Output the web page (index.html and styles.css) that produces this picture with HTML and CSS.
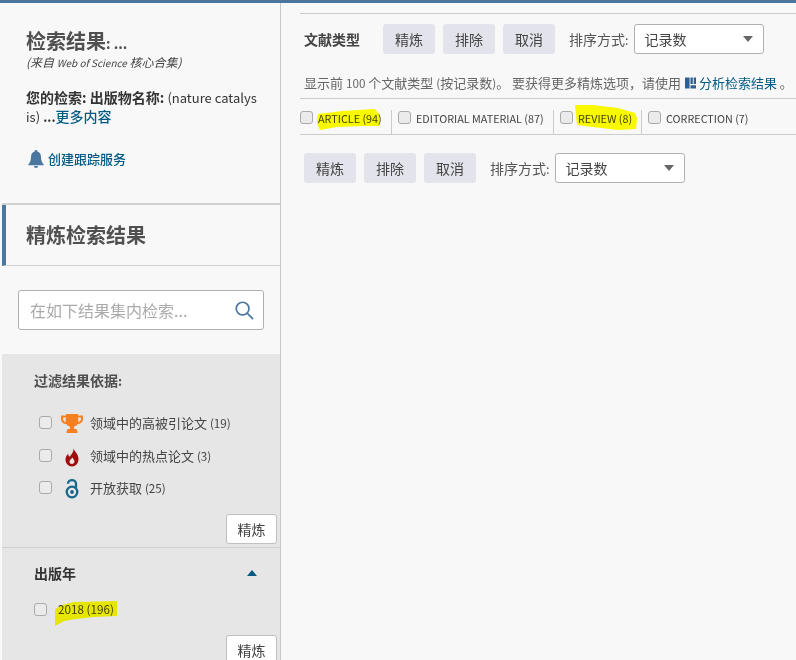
FILE: index.html
```html
<!DOCTYPE html>
<html lang="zh">
<head>
<meta charset="utf-8">
<title>检索结果</title>
<link rel="stylesheet" href="styles.css">
</head>
<body>
<div class="page">
  <aside class="side">
    <section class="summary">
      <h1>检索结果<span class="tail">: ...</span></h1>
      <p class="source">(来自 <span class="wos">Web of Science</span> 核心合集)</p>
      <p class="query"><b>您的检索: 出版物名称:</b> <span class="term">(nature catalys<br>is)</span> <b class="lat">...</b><a class="more">更多内容</a></p>
      <a class="alert">
        <svg class="bell" viewBox="0 0 16 18"><path d="M8 0a1.300 1.300 0 0 1 1.300 1.500C11.800 2.100 13 4.300 13 7c0 3.500 1 5.500 2.600 7.300.3.400.1.900-.4.900H.8c-.5 0-.7-.5-.4-.9C2 12.500 3 10.500 3 7c0-2.700 1.200-4.900 3.700-5.500A1.300 1.300 0 0 1 8 0zM6 16h4a2 2 0 0 1-4 0z"/></svg>
        <span>创建跟踪服务</span>
      </a>
    </section>
    <h2 class="refine-title">精炼检索结果</h2>
    <div class="search-wrap">
      <div class="search">
        <span class="placeholder">在如下结果集内检索...</span>
        <svg class="search-icon" viewBox="0 0 20 20"><circle cx="8" cy="8" r="6.700" /><path d="M13 13l6 6"/></svg>
      </div>
    </div>
    <section class="panel filters">
      <h3>过滤结果依据<span class="lat">:</span></h3>
      <ul class="filter-list">
        <li><input type="checkbox" class="box">
          <svg class="ficon" viewBox="0 0 22 20"><path fill="#f5801f" d="M5 0h12v1.500h5V5c0 3-2.500 5-5.500 5.300-.8 1.200-2 2-3.500 2.300V15h2.500l1 3v1H5.500v-1l1-3H9v-2.400c-1.500-.3-2.700-1.100-3.500-2.300C2.500 10 0 8 0 5V1.500h5zM2 3.500V5c0 1.500 1.200 2.800 2.800 3.200C4.300 6.900 4.900 5 5 3.500zm18 0h-3c.1 1.500.7 3.400.2 4.700C18.800 7.800 20 6.500 20 5z"/></svg>
          <span>领域中的高被引论文 <span class="lat">(19)</span></span></li>
        <li><input type="checkbox" class="box">
          <svg class="ficon" viewBox="0 0 22 20"><path fill="#a00c0c" fill-rule="evenodd" d="M12.500 1c.5 3.500 5 5.500 5 11 0 4.500-3 7.500-6.500 7.500S4.500 16.500 4.500 12.500c0-2.800 1.500-4.800 2.800-5.800 0 1.500.3 2.500 1.200 3C10 8 13 5 12.500 1zM11.500 10.500c-1.200 1.500-3 2.500-3 4.300 0 1.400 1.100 2.200 2.400 2.200s2.600-.9 2.600-2.400c0-1.600-1.500-2.500-2-4.100z"/></svg>
          <span>领域中的热点论文 <span class="lat">(3)</span></span></li>
        <li><input type="checkbox" class="box">
          <svg class="ficon" viewBox="0 0 22 20"><g fill="none" stroke="#13688c" stroke-width="2.300"><circle cx="11" cy="13" r="5.300"/><path d="M7 4.800C7 2.600 8.800 1.200 11 1.200s4 1.400 4 3.600v4"/></g><circle cx="11" cy="13" r="1.900" fill="#13688c"/></svg>
          <span>开放获取 <span class="lat">(25)</span></span></li>
      </ul>
      <div class="panel-foot"><button class="btn-white">精炼</button></div>
    </section>
    <section class="panel years">
      <div class="year-head"><h3>出版年</h3><i class="caret-up"></i></div>
      <label class="year-row"><input type="checkbox" class="box">
        <span class="marked lat">2018 (196)
          <svg class="scribble s-year" viewBox="0 0 63 25"><path d="M1 8L8 4 20 1 63 0V15L40 16 22 18 10 20 1 25z"/></svg>
        </span></label>
      <div class="panel-foot"><button class="btn-white">精炼</button></div>
    </section>
  </aside>
  <main class="main">
    <div class="toolbar first">
      <strong class="type-title">文献类型</strong>
      <button class="btn">精炼</button>
      <button class="btn">排除</button>
      <button class="btn">取消</button>
      <span class="sort-label">排序方式<span class="lat">:</span></span>
      <div class="select"><span>记录数</span><i class="caret-down"></i></div>
    </div>
    <p class="note">显示前 <span class="lat">100</span> 个文献类型 <span class="lat">(</span>按记录数<span class="lat">)</span>。 要获得更多精炼选项，请使用 <svg class="analyze" viewBox="0 0 12 12"><path d="M0 0h5v12H0zM6 0h2.500v7H6zM9.500 0H12v7H9.500zM6 8.500h6V12H6z"/></svg> <a>分析检索结果</a> 。</p>
    <div class="types">
      <label class="type t1"><input type="checkbox" class="box"><span class="marked">ARTICLE (94)
        <svg class="scribble s-article" viewBox="0 0 63 21"><path d="M1 5L25 2 58 0 63 6 62 17 45 17 20 18 3 21 0 14z"/></svg></span></label>
      <label class="type t2"><input type="checkbox" class="box"><span>EDITORIAL MATERIAL (87)</span></label>
      <label class="type t3"><input type="checkbox" class="box"><span class="marked">REVIEW (8)
        <svg class="scribble s-review" viewBox="0 0 64 26"><path d="M2 1L20 1 45 4 62 9 64 14 63 25 45 26 20 23 4 21 3 12z"/></svg></span></label>
      <label class="type t4"><input type="checkbox" class="box"><span>CORRECTION (7)</span></label>
    </div>
    <div class="toolbar second">
      <button class="btn">精炼</button>
      <button class="btn">排除</button>
      <button class="btn">取消</button>
      <span class="sort-label">排序方式<span class="lat">:</span></span>
      <div class="select"><span>记录数</span><i class="caret-down"></i></div>
    </div>
  </main>
</div>
</body>
</html>
```
FILE: styles.css
```css
* { box-sizing: border-box; }
html, body { margin: 0; height: 660px; overflow: hidden; background: #f8f8f8; }
body { font-family: "Noto Sans CJK SC", "Noto Sans", sans-serif; font-size: 14px; color: #444; }
h1, h2, h3, p, ul { margin: 0; padding: 0; }
ul { list-style: none; }
button { font-family: inherit; }
.lat { font-size: 0.9em; line-height: 1; }

.page { display: flex; height: 660px; border-top: 3px solid #4b76a0; }

/* Sidebar */
.side { width: 279px; flex: none; margin-left: 2px; border-right: 1px solid #c8c8c8; display: flex; flex-direction: column; }
.summary { height: 202px; padding: 25px 0 0 24px; border-bottom: 2px solid #d0d0d0; }
.summary h1 { font-size: 20px; line-height: 26px; font-weight: 700; color: #505050; }
.tail { font-size: 14px; line-height: 1; }
.source { font-size: 12px; line-height: 16px; font-style: italic; color: #444; }
.wos { font-size: 10px; line-height: 1; }
.query { margin-top: 18px; font-size: 14px; line-height: 19px; color: #333; white-space: nowrap; }
.query b { font-weight: 700; color: #333; }
.term { font-size: 13px; line-height: 1; }
.more { color: #005a84; font-weight: 500; }
.alert { display: flex; align-items: center; gap: 4px; margin: 23px 0 0 2px; color: #005a84; font-size: 13px; font-weight: 500; line-height: 20px; }
.bell { width: 16px; height: 18px; fill: #4b76a0; }

.refine-title { height: 61px; line-height: 60px; padding-left: 20px; border-left: 4px solid #4b76a0; border-bottom: 1px solid #d0d0d0; font-size: 20px; font-weight: 700; color: #505050; }

.search-wrap { padding: 24px 16px; }
.search { height: 40px; background: #fff; border: 1px solid #b0b0b4; border-radius: 3px; display: flex; align-items: center; justify-content: space-between; padding: 0 9px 0 11px; }
.placeholder { font-size: 16px; color: #aaa; }
.search-icon { width: 19px; height: 19px; fill: none; stroke: #4b76a0; stroke-width: 1.800; }

.panel { background: #e6e6e6; }
.panel h3 { font-size: 14px; color: #505050; font-weight: 700; line-height: 20px; }
.filters { height: 194px; padding: 16px 3px 0 32px; border-bottom: 1px solid #d0d0d0; display: flex; flex-direction: column; }
.filter-list { margin-top: 22px; display: flex; flex-direction: column; gap: 11.500px; padding-left: 5px; }
.filter-list li { display: flex; align-items: center; height: 21px; font-size: 13px; color: #444; }
.ficon { width: 22px; height: 20px; margin: 3px 7px 0 9px; flex: none; }
.panel-foot { display: flex; justify-content: flex-end; }
.filters .panel-foot { margin-top: auto; padding-bottom: 3px; }
.btn-white { width: 51px; height: 30px; padding: 0; background: #fff; border: 1px solid #c0c0c0; border-radius: 3px; font-size: 14px; color: #444; }

.years { flex: 1; padding: 15px 3px 0 32px; min-height: 0; }
.year-head { display: flex; justify-content: space-between; align-items: center; padding-right: 20px; }
.panel .year-head h3 { color: #333; }
.caret-up { width: 0; height: 0; border: 5px solid transparent; border-top: 0; border-bottom: 6px solid #0a5a80; }
.year-row { display: flex; align-items: center; height: 20px; margin-top: 16px; font-size: 13px; color: #444; }
.year-row .box { margin-right: 11px; }
.years .panel-foot { margin-top: 16px; }

.box { appearance: none; width: 13px; height: 13px; margin: 0; flex: none; background: #ebebeb; border: 1px solid #aaa; border-radius: 3px; }

/* Highlighter marks */
.marked { position: relative; white-space: nowrap; }
.scribble { position: absolute; fill: #ffff00; mix-blend-mode: multiply; }
.s-article { left: -1px; top: -2px; width: 63px; height: 21px; }
.s-review { left: -5px; top: -7px; width: 64px; height: 26px; }
.s-year { left: -4px; top: -2px; width: 63px; height: 25px; }

/* Main */
.main { flex: 1; min-width: 0; padding: 10px 0 0 19px; }
.main::before { content: ""; display: block; height: 1px; background: #ccc; }
.toolbar { display: flex; align-items: center; height: 30px; }
.first { margin-top: 10px; }
.type-title { width: 83px; padding-left: 4px; font-weight: 700; color: #444; font-size: 14px; }
.btn { width: 52px; height: 30px; padding: 0; margin-right: 8px; background: #e3e3ec; border: 0; border-radius: 3px; font-size: 14px; color: #444; }
.sort-label { margin: 0 5px 0 6px; font-size: 14px; color: #555; white-space: nowrap; }
.select { width: 130px; height: 30px; padding: 0 10px; background: #fff; border: 1px solid #b0b0b4; border-radius: 3px; display: flex; align-items: center; justify-content: space-between; color: #444; }
.caret-down { width: 0; height: 0; border: 5.500px solid transparent; border-bottom: 0; border-top: 6px solid #666; }
.note { margin-top: 19px; padding-left: 4px; font-size: 13px; line-height: 20px; color: #666; white-space: nowrap; }
.note a { color: #005a84; }
.analyze { width: 11px; height: 12px; fill: #2f5f90; vertical-align: -1px; margin-left: 1px; }
.types { display: flex; margin-top: 5px; padding-top: 11px; height: 37px; border-top: 1px solid #ccc; border-bottom: 1px solid #ccc; }
.type { display: flex; gap: 5px; height: 25px; padding-top: 1px; font-size: 10.800px; color: #444; white-space: nowrap; border-left: 1px solid #ccc; padding-left: 6px; }
.type span { line-height: 15px; }
.t1 { width: 91px; padding-left: 0; border-left: 0; }
.t2 { width: 162px; }
.t3 { width: 88px; }
.second { margin-top: 18px; padding-left: 4px; }
```
